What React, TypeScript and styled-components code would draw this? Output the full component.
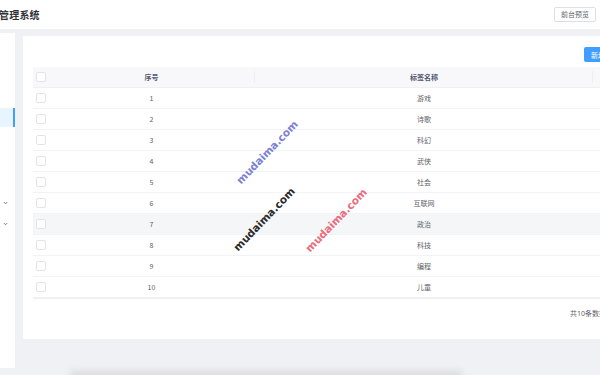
import styled, { createGlobalStyle } from "styled-components";

const GlobalStyle = createGlobalStyle`
  html, body {
    margin: 0;
    padding: 0;
    background: #f0f2f5;
  }
  body {
    font-family: "Noto Sans", "Noto Sans CJK SC", sans-serif;
  }
`;

const Page = styled.div`
  position: relative;
  width: 600px;
  height: 375px;
  overflow: hidden;
  background: #f0f1f4;
`;

const Header = styled.header`
  height: 29px;
  background: #fff;
  display: flex;
  align-items: center;
  justify-content: space-between;
  padding-right: 4px;
  box-sizing: border-box;
`;

const Title = styled.h1`
  margin: 0 0 0 -1px;
  font-size: 10px;
  font-weight: 700;
  color: #303133;
  letter-spacing: 0.2px;
  font-family: "Noto Sans CJK SC", sans-serif;
`;

const PreviewButton = styled.button`
  height: 15px;
  padding: 0 6px;
  font-size: 7px;
  line-height: 13px;
  color: #606266;
  background: #fff;
  border: 1px solid #dcdfe6;
  border-radius: 2px;
  font-family: "Noto Sans CJK SC", sans-serif;
`;

const Body = styled.div`
  display: flex;
  align-items: flex-start;
  padding-top: 4px;
`;

const Sidebar = styled.aside`
  flex: none;
  width: 15px;
  height: 335px;
  background: #fff;
  display: flex;
  flex-direction: column;
`;

const MenuItem = styled.div<{ $h: number; $active?: boolean }>`
  height: ${(p) => p.$h}px;
  box-sizing: border-box;
  display: flex;
  align-items: center;
  padding-left: 3px;
  background: ${(p) => (p.$active ? "#e8f4ff" : "transparent")};
  border-right: ${(p) => (p.$active ? "2px solid #409eff" : "none")};
  color: #606266;
`;

const Main = styled.main`
  flex: none;
  padding: 3px 0 0 8px;
`;

const Card = styled.section`
  width: 660px;
  height: 303px;
  box-sizing: border-box;
  background: #fff;
  padding: 11px 10px 0 10px;
  display: flex;
  flex-direction: column;
`;

const Toolbar = styled.div`
  display: flex;
  justify-content: flex-end;
  margin-bottom: 5px;
`;

const PrimaryButton = styled.button`
  width: 30px;
  height: 15px;
  margin-right: 59px;
  padding: 0 0 0 7px;
  border: none;
  border-radius: 2px;
  background: #409eff;
  color: #fff;
  font-size: 7px;
  text-align: left;
  font-family: "Noto Sans CJK SC", sans-serif;
`;

const Table = styled.div`
  display: grid;
  grid-template-columns: 15px 207px 338px 1fr;
  font-family: "Noto Sans CJK SC", sans-serif;
  font-size: 7px;
  color: #606266;
  border-bottom: 1px solid #ebeef5;
`;

const Row = styled.div<{ $head?: boolean; $hover?: boolean }>`
  display: contents;
  & > div {
    height: 21px;
    box-sizing: border-box;
    border-bottom: 1px solid ${(p) => (p.$head ? "#f0f0f3" : "#f2f3f6")};
    background: ${(p) => (p.$head ? "#f8f8fa" : p.$hover ? "#f5f6f8" : "#fff")};
    font-weight: ${(p) => (p.$head ? 700 : 400)};
    color: ${(p) => (p.$head ? "#515a6e" : "#606266")};
  }
`;

const Cell = styled.div<{ $sep?: boolean }>`
  display: flex;
  align-items: center;
  justify-content: center;
  position: relative;
  ${(p) =>
    p.$sep
      ? `&::after { content: ""; position: absolute; right: 0; top: 4px; bottom: 4px; width: 1px; background: #ebeef5; }`
      : ""}
`;

const CheckCell = styled.div`
  display: flex;
  align-items: center;
  padding-left: 3px;
`;

const Checkbox = styled.span`
  width: 10px;
  height: 10px;
  box-sizing: border-box;
  border: 1px solid #e2e4ea;
  border-radius: 2px;
  background: #fff;
`;

const Footer = styled.div`
  display: flex;
  justify-content: flex-end;
  padding: 9px 0;
  font-size: 7px;
  color: #606266;
  font-family: "Noto Sans", "Noto Sans CJK SC", sans-serif;
`;

const Total = styled.span`
  width: 50px;
  margin-right: 53px;
  white-space: nowrap;
`;

const Watermark = styled.span<{ $color: string }>`
  position: absolute;
  transform: translate(-50%, -50%) rotate(-46deg);
  font-family: "DejaVu Sans", sans-serif;
  font-weight: 700;
  font-size: 10.5px;
  color: ${(p) => p.$color};
  white-space: nowrap;
  pointer-events: none;
`;

const FloatingBar = styled.div`
  position: absolute;
  left: 70px;
  top: 370px;
  width: 392px;
  height: 14px;
  background: rgba(0, 0, 0, 0.07);
  filter: blur(3px);
`;

const Chevron = () => (
  <svg width="5" height="4" viewBox="0 0 10 8">
    <path d="M1.5 2 L5 5.5 L8.5 2" fill="none" stroke="#606266" strokeWidth="1.6" />
  </svg>
);

const tags = ["游戏", "诗歌", "科幻", "武侠", "社会", "互联网", "政治", "科技", "编程", "儿童"];

export default function App() {
  return (
    <Page>
      <GlobalStyle />
      <Header>
        <Title>管理系统</Title>
        <PreviewButton>前台预览</PreviewButton>
      </Header>
      <Body>
        <Sidebar>
          <MenuItem $h={75} />
          <MenuItem $h={19} $active />
          <MenuItem $h={65} />
          <MenuItem $h={21}>
            <Chevron />
          </MenuItem>
          <MenuItem $h={21}>
            <Chevron />
          </MenuItem>
        </Sidebar>
        <Main>
          <Card>
            <Toolbar>
              <PrimaryButton>新增</PrimaryButton>
            </Toolbar>
            <Table>
              <Row $head>
                <CheckCell>
                  <Checkbox />
                </CheckCell>
                <Cell $sep>序号</Cell>
                <Cell $sep>标签名称</Cell>
                <Cell>操作</Cell>
              </Row>
              {tags.map((t, i) => (
                <Row key={t} $hover={i === 6}>
                  <CheckCell>
                    <Checkbox />
                  </CheckCell>
                  <Cell>{i + 1}</Cell>
                  <Cell>{t}</Cell>
                  <Cell />
                </Row>
              ))}
            </Table>
            <Footer>
              <Total>共10条数据</Total>
            </Footer>
          </Card>
        </Main>
      </Body>
      <FloatingBar />
      <Watermark $color="#7b7fd6" style={{ left: 267, top: 152 }}>
        mudaima.com
      </Watermark>
      <Watermark $color="#2a2a2a" style={{ left: 264, top: 219 }}>
        mudaima.com
      </Watermark>
      <Watermark $color="#ec6a7a" style={{ left: 336, top: 220 }}>
        mudaima.com
      </Watermark>
    </Page>
  );
}
